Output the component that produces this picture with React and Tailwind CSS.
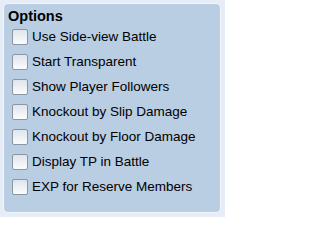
const options = [
  'Use Side-view Battle',
  'Start Transparent',
  'Show Player Followers',
  'Knockout by Slip Damage',
  'Knockout by Floor Damage',
  'Display TP in Battle',
  'EXP for Reserve Members',
];

function CheckRow({ label }) {
  return (
    <label className="flex h-[25px] items-center gap-[4px] pl-[4px]">
      <span className="h-[16px] w-[16px] shrink-0 rounded-[2px] border border-[#8b96a3] bg-gradient-to-b from-[#dfe5ec] to-[#fbfcfd]" />
      <span className="text-[13.5px] leading-none text-black">{label}</span>
    </label>
  );
}

export default function App() {
  return (
    <div className="h-[217px] w-[225px] bg-[#e6edf6] p-[3px]" style={{ fontFamily: '"Liberation Sans", Arial, sans-serif' }}>
      <div className="h-[210px] w-[218px] rounded-[5px] border border-[#f3f7fc] bg-[#b9cde3] pl-[4px] pt-[4px]">
        <div className="h-[16px] text-[14.5px] font-bold leading-[16px] text-black">Options</div>
        <div>
          {options.map((o) => (
            <CheckRow key={o} label={o} />
          ))}
        </div>
      </div>
    </div>
  );
}
